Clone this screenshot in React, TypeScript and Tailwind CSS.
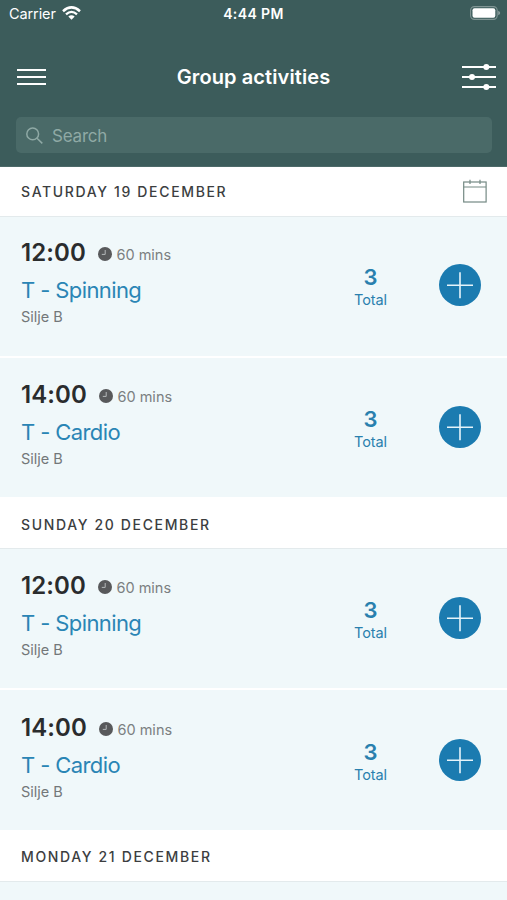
type Activity = { time: string; name: string; height: string };

const days: { label: string; calendar?: boolean; bar: string; activities: Activity[] }[] = [
  {
    label: 'SATURDAY 19 DECEMBER',
    calendar: true,
    bar: 'h-[50px]',
    activities: [
      { time: '12:00', name: 'T - Spinning', height: 'h-[139px] pt-[22px]' },
      { time: '14:00', name: 'T - Cardio', height: 'h-[139px] pt-[23px]' },
    ],
  },
  {
    label: 'SUNDAY 20 DECEMBER',
    bar: 'h-[52px] pt-[3px]',
    activities: [
      { time: '12:00', name: 'T - Spinning', height: 'h-[139px] pt-[23px]' },
      { time: '14:00', name: 'T - Cardio', height: 'h-[140px] pt-[24px]' },
    ],
  },
  { label: 'MONDAY 21 DECEMBER', bar: 'h-[52px] pt-[2px]', activities: [] },
];

function WifiIcon() {
  return (
    <svg className="ml-[6px] mb-[2px] h-[14px] w-[19px]" viewBox="0 0 19 14" fill="none" stroke="#fff">
      <path d="M1 5.2 Q9.5 -2.4 18 5.2" strokeWidth="2.5" />
      <path d="M4 8.4 Q9.5 3.4 15 8.4" strokeWidth="2.3" />
      <path d="M9.5 13.8 L6.3 10.6 Q9.5 7.8 12.7 10.6 Z" fill="#fff" stroke="none" />
    </svg>
  );
}

function BatteryIcon() {
  return (
    <svg className="mb-px h-[14px] w-[31px]" viewBox="0 0 31 14">
      <rect x="0.6" y="0.6" width="26.6" height="12.8" rx="3.8" fill="none" stroke="#fff" strokeOpacity="0.35" strokeWidth="1.1" />
      <rect x="2.5" y="2.2" width="22.8" height="9.6" rx="2" fill="#fff" />
      <path d="M28.2 4.8 Q30.2 5.6 30.2 7 Q30.2 8.4 28.2 9.2 Z" fill="#fff" fillOpacity="0.4" />
    </svg>
  );
}

function Header() {
  return (
    <header className="h-[167px] border-b border-[#4d6a69] bg-[#3c5c5b] text-white">
      <div className="grid h-[27px] grid-cols-3 items-center pl-[9px] pr-[6px]">
        <div className="flex items-center">
          <span className="pt-px text-[14.5px] leading-none tracking-[-0.1px]">Carrier</span>
          <WifiIcon />
        </div>
        <span className="mr-[3px] text-center text-[14px] font-semibold leading-none tracking-[0.4px]">4:44 PM</span>
        <div className="flex justify-end">
          <BatteryIcon />
        </div>
      </div>
      <div className="flex h-[90px] items-center justify-between pl-[17px] pr-[11px] pt-[9px]">
        <button className="flex w-[29px] flex-col gap-[5px]" aria-label="Menu">
          <span className="h-[2px] w-full bg-white" />
          <span className="h-[2px] w-full bg-white" />
          <span className="h-[2px] w-full bg-white" />
        </button>
        <h1 className="mr-px text-[20px] font-semibold leading-none tracking-[0.1px]">Group activities</h1>
        <svg className="h-[28px] w-[34px]" viewBox="0 0 34 28" fill="#fff">
          <rect y="3" width="34" height="2" />
          <rect y="13" width="34" height="2" />
          <rect y="23" width="34" height="2" />
          <circle cx="24.3" cy="4" r="3" />
          <circle cx="10" cy="14" r="3" />
          <circle cx="24.3" cy="24" r="3" />
        </svg>
      </div>
      <div className="ml-[16px] mr-[15px] flex h-[36px] items-center rounded-[5px] bg-[#4a6a68] pl-[10px] text-[#8fa9a5]">
        <svg className="h-[17px] w-[17px]" viewBox="0 0 17 17" fill="none" stroke="currentColor" strokeWidth="1.5">
          <circle cx="6.7" cy="6.9" r="5.9" />
          <path d="M11 11.2 L16.3 16.4" />
        </svg>
        <span className="ml-[9px] pt-[2px] text-[17px] leading-none tracking-[-0.2px]">Search</span>
      </div>
    </header>
  );
}

function ActivityRow({ time, name, height }: Activity) {
  return (
    <div className={`flex bg-[#f0f8fa] pl-[21px] pr-[26px] ${height}`}>
      <div className="flex-1">
        <div className="flex h-[28px] items-center">
          <span className="text-[24px] font-semibold leading-none tracking-[0.1px] text-[#2a2c2d]">{time}</span>
          <svg className="ml-[12px] mt-[2px] h-[14px] w-[14px]" viewBox="0 0 14 14">
            <circle cx="7" cy="7" r="7" fill="#58595b" />
            <path d="M7.2 3 V7.4 H3.8" fill="none" stroke="#b5b9ba" strokeWidth="1" />
          </svg>
          <span className="ml-[4.5px] mt-[5px] text-[14.5px] leading-none text-[#7b7f81]">60 mins</span>
        </div>
        <div className="mt-[10px] text-[22px] leading-[26px] tracking-[-0.6px] text-[#2a85b5]">{name}</div>
        <div className="mt-[5px] text-[14.5px] leading-[18px] text-[#737779]">Silje B</div>
      </div>
      <div className="mt-[25px] w-[60px] text-center text-[#2a80ae]">
        <div className="pl-px text-[22px] font-semibold leading-[26px]">3</div>
        <div className="mt-[1px] pl-px text-[14.5px] leading-[18px] tracking-[-0.1px]">Total</div>
      </div>
      <button className="ml-[39px] mt-[25px] h-[42px] w-[42px]" aria-label="Add">
        <svg viewBox="0 0 42 42" className="h-full w-full">
          <circle cx="21" cy="21" r="21" fill="#1b7bb0" />
          <path d="M21 8.2 V34.2 M8 21.2 H34" stroke="#e6f4fa" strokeWidth="1.6" />
        </svg>
      </button>
    </div>
  );
}

export default function App() {
  return (
    <div className="h-[900px] w-[507px] overflow-hidden bg-[#f0f8fa] font-['Inter',sans-serif]">
      <Header />
      {days.map((day) => (
        <section key={day.label}>
          <div className={`flex items-center justify-between border-b border-[#e3eaec] bg-white pl-[21px] pr-[20px] ${day.bar}`}>
            <h2 className="pt-px text-[14px] font-medium leading-none tracking-[1.65px] text-[#3c3e3f]">{day.label}</h2>
            {day.calendar && (
              <svg className="mb-px h-[24px] w-[24px]" viewBox="0 0 24 24" fill="none" stroke="#748984" strokeWidth="1.2">
                <rect x="0.7" y="3" width="22.4" height="20" />
                <path d="M0.7 8 H23 M7 0.8 V5 M17 0.8 V5" />
              </svg>
            )}
          </div>
          <div className="flex flex-col gap-[2px] bg-white">
            {day.activities.map((activity) => (
              <ActivityRow key={activity.time} {...activity} />
            ))}
          </div>
        </section>
      ))}
    </div>
  );
}
